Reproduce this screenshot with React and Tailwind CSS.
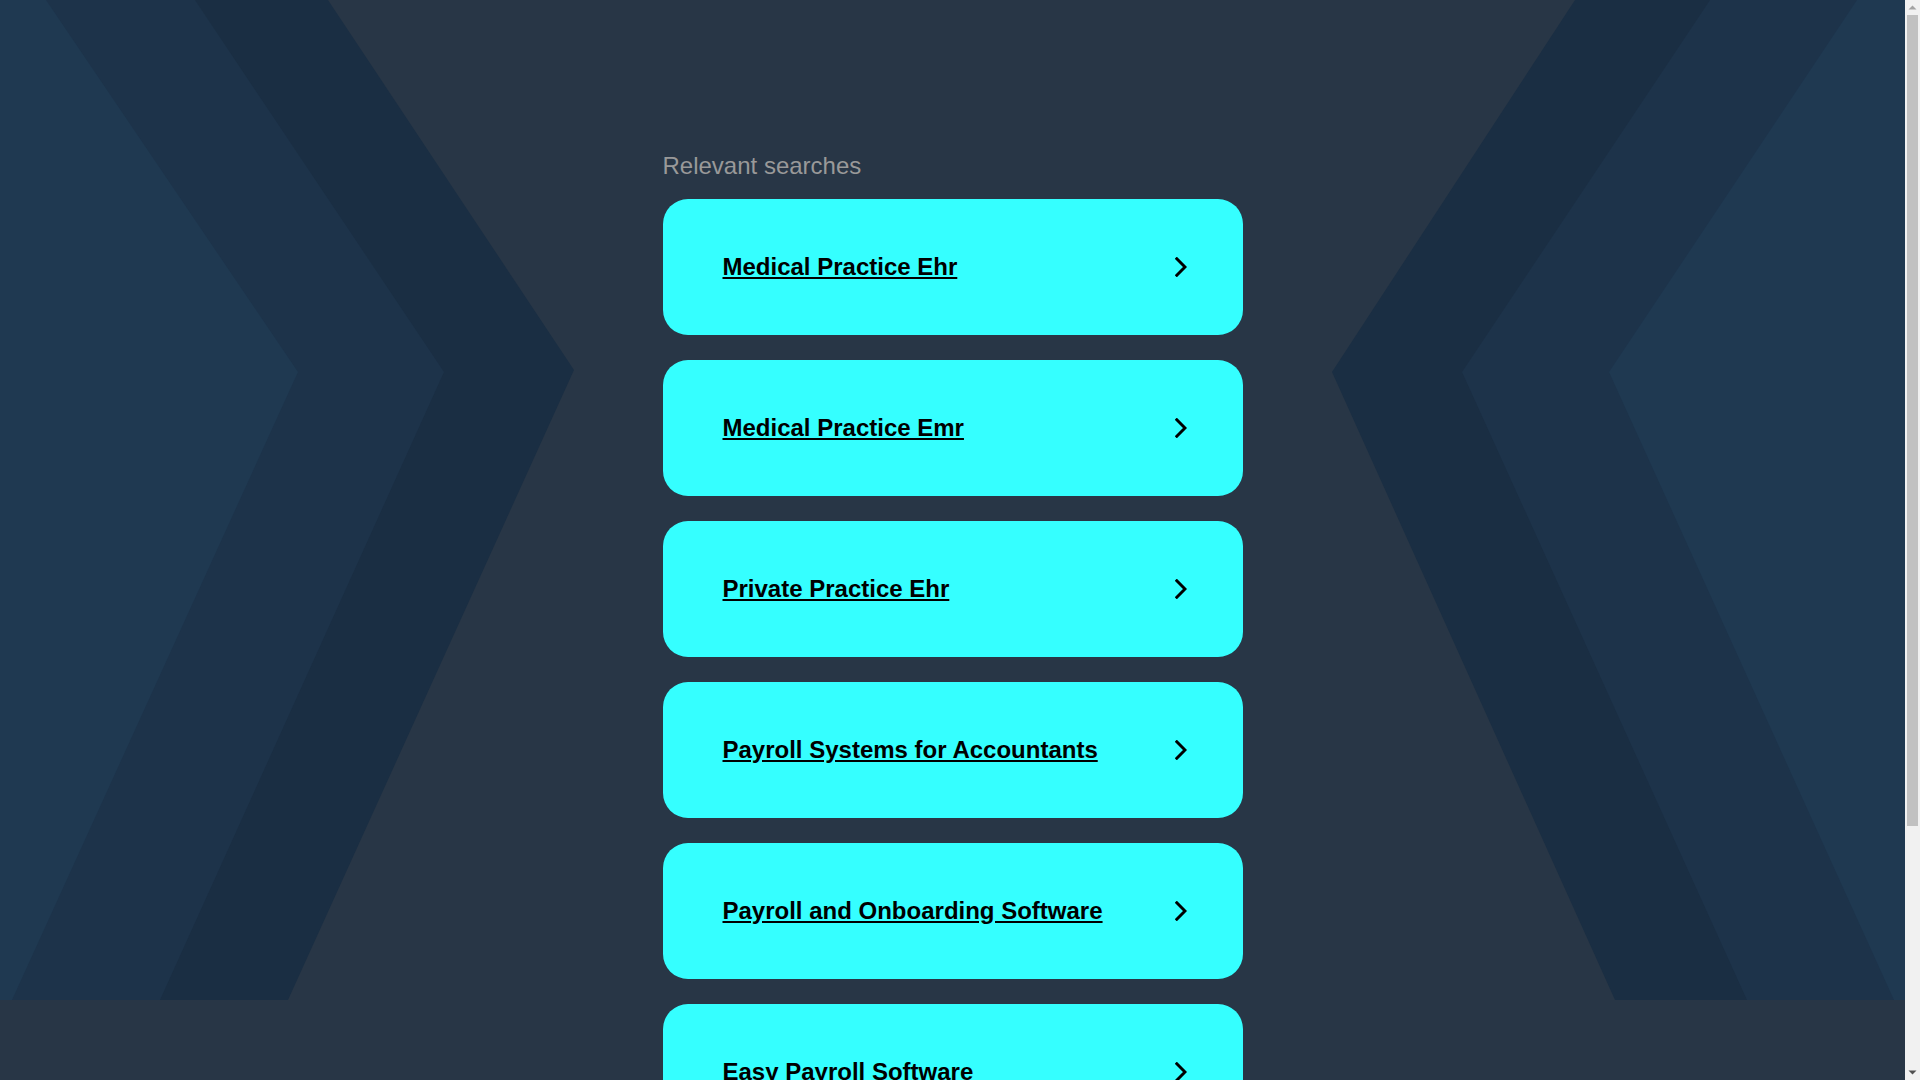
import React from "react";

const items = [
  "Medical Practice Ehr",
  "Medical Practice Emr",
  "Private Practice Ehr",
  "Payroll Systems for Accountants",
  "Payroll and Onboarding Software",
  "Easy Payroll Software",
];

function Chevron() {
  return (
    <svg width="12" height="20" viewBox="0 0 12 20" className="shrink-0">
      <polyline
        points="1.8,1.8 10,10 1.8,18.2"
        fill="none"
        stroke="#000"
        strokeWidth="3"
        strokeLinecap="square"
      />
    </svg>
  );
}

function Background() {
  return (
    <svg
      className="absolute left-0 top-0 w-full h-[1000px]"
      viewBox="0 0 1905 1000"
      preserveAspectRatio="none"
    >
      {/* left chevron */}
      <polygon points="0,0 328,0 574,370 288,1000 0,1000" fill="#1a2e43" />
      <polygon points="0,0 195,0 444,372 160,1000 0,1000" fill="#1d334a" />
      <polygon points="0,0 46,0 298,372 12,1000 0,1000" fill="#1f3951" />
      {/* right chevron */}
      <polygon points="1905,0 1575,0 1332,372 1615,1000 1905,1000" fill="#1a2e43" />
      <polygon points="1905,0 1710,0 1462,372 1747,1000 1905,1000" fill="#1d334a" />
      <polygon points="1905,0 1857,0 1609,372 1894,1000 1905,1000" fill="#1f3951" />
    </svg>
  );
}

function FakeScrollbar() {
  return (
    <div className="fixed right-0 top-0 h-screen w-[15px] bg-[#f1f1f1]">
      <svg className="absolute left-0 top-0" width="15" height="15" viewBox="0 0 15 15">
        <polygon points="3.5,9.5 7.5,5.5 11.5,9.5" fill="#a3a3a3" />
      </svg>
      <div className="absolute left-[2px] top-[15px] h-[811px] w-[11px] bg-[#c1c1c1]" />
      <svg className="absolute bottom-0 left-0" width="15" height="15" viewBox="0 0 15 15">
        <polygon points="3.5,5.5 11.5,5.5 7.5,9.5" fill="#505050" />
      </svg>
    </div>
  );
}

export default function App() {
  return (
    <div className="flex min-h-[1406px] bg-[#283646] font-['Liberation_Sans',Arial,sans-serif]">
      <main className="relative flex-1">
        <Background />
        <div className="relative mx-auto w-[580px] pt-[152px]">
          <h2 className="mb-[19px] text-[24px] font-normal leading-[28px] text-[#999999]">
            Relevant searches
          </h2>
          <div className="flex flex-col gap-[25px]">
            {items.map((t) => (
              <a
                key={t}
                href="#"
                className="flex h-[136px] items-center justify-between rounded-[25px] bg-[#35ffff] pl-[60px] pr-[56px]"
              >
                <span className="text-[24px] font-bold leading-[28px] text-black underline">
                  {t}
                </span>
                <Chevron />
              </a>
            ))}
          </div>
        </div>
      </main>
      <div className="w-[15px] shrink-0" />
      <FakeScrollbar />
    </div>
  );
}
